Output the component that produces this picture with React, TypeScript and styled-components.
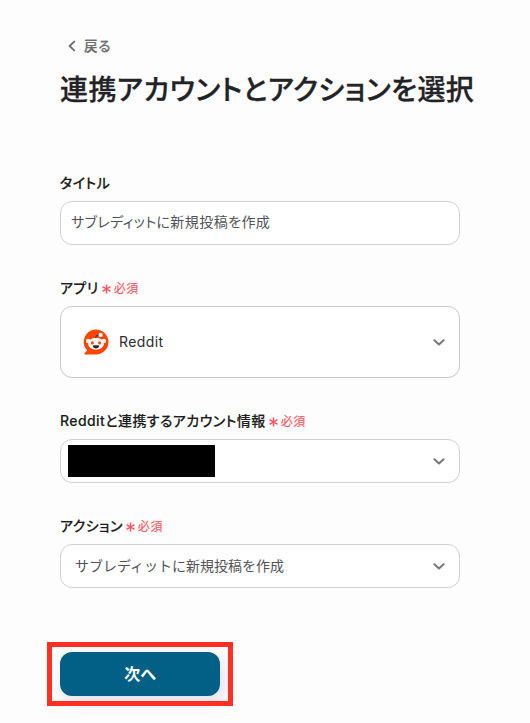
import React from "react";
import styled, { createGlobalStyle, css } from "styled-components";

const GlobalStyle = createGlobalStyle`
  *, *::before, *::after { box-sizing: border-box; }
  html, body { margin: 0; background: #fdfdfe; }
  body {
    color: #222;
    font-family: Inter, "Noto Sans CJK JP", sans-serif;
    font-size: 14px;
    font-feature-settings: "palt";
    overflow: hidden;
  }
  button, input { font: inherit; font-feature-settings: inherit; }
`;

const Page = styled.main`
  width: 460px;
  height: 723px;
  padding: 36px 0 0 60px;
`;

const BackButton = styled.button`
  display: flex;
  align-items: center;
  gap: 6px;
  height: 20px;
  padding: 0 0 0 6px;
  border: 0;
  background: none;
  color: #6c6c6c;
  font-size: 13.5px;
  font-weight: 500;
  line-height: 20px;
  letter-spacing: 0.8px;
  -webkit-text-stroke: 0.2px currentColor;
`;

const Title = styled.h1`
  margin: 14px 0 0;
  height: 40px;
  color: #232326;
  font-size: 28px;
  font-weight: 500;
  line-height: 40px;
  letter-spacing: 0.42px;
  -webkit-text-stroke: 0.3px currentColor;
  white-space: nowrap;
`;

const Form = styled.form`
  display: flex;
  flex-direction: column;
  gap: 32px;
  margin-top: 62px;
`;

const Field = styled.div`
  display: flex;
  flex-direction: column;
  gap: 9px;
`;

const Label = styled.label<{ $required?: boolean }>`
  display: flex;
  align-items: center;
  gap: 3px;
  height: 20px;
  padding-top: ${({ $required }) => ($required ? 2 : 1)}px;
  color: #1d1d20;
  font-size: 14px;
  font-weight: 500;
  line-height: 20px;
  letter-spacing: 0.42px;
  -webkit-text-stroke: 0.15px currentColor;
  white-space: nowrap;
`;

const Required = styled.span`
  display: flex;
  align-items: center;
  gap: 3px;
  padding-top: 2px;
  color: #ff5660;
  font-size: 12px;
  font-weight: 400;
  letter-spacing: 0.7px;
  -webkit-text-stroke: 0.15px currentColor;
`;

const box = css`
  width: 400px;
  border: 1px solid #cfcfd8;
  border-radius: 12px;
  background: #fff;
  color: #515158;
  font-size: 14px;
`;

const TextInput = styled.input`
  ${box}
  height: 44px;
  padding: 0 10px 4px;
  letter-spacing: 0.42px;
  outline: none;
`;

const Select = styled.div<{ $tall?: boolean }>`
  ${box}
  display: flex;
  align-items: center;
  justify-content: space-between;
  height: ${({ $tall }) => ($tall ? 72 : 44)}px;
  padding: 0 13px 0 ${({ $tall }) => ($tall ? 22 : 7)}px;
  border-color: ${({ $tall }) => ($tall ? "#c8c8ca" : "#cfcfdc")};
`;

const AppOption = styled.div`
  display: flex;
  align-items: center;
  gap: 10px;
  color: #2b2b2f;
  letter-spacing: 0.42px;
`;

const AppName = styled.span`
  padding-bottom: 2px;
`;

const ActionOption = styled.span`
  padding: 0 0 3px 7px;
  font-feature-settings: normal;
`;

const Redaction = styled.div`
  width: 147px;
  height: 32px;
  background: #000;
`;

const Submit = styled.div`
  position: relative;
  width: 160px;
  margin-top: 32px;
`;

const SubmitButton = styled.button`
  display: block;
  width: 160px;
  height: 44px;
  padding: 0 0 2px;
  border: 0;
  border-radius: 12px;
  background: #026087;
  color: #fff;
  font-size: 16px;
  font-weight: 700;
  box-shadow: 4px 6px 16px rgba(40, 40, 90, 0.14);
`;

const Highlight = styled.div`
  position: absolute;
  inset: -10px -13px;
  border: 5px solid #ff2f24;
  pointer-events: none;
`;

const Chevron = () => (
  <svg width="14" height="10" viewBox="0 0 14 10" fill="none">
    <path d="M2.4 3.2 7 7.4l4.6-4.2" stroke="#77777a" strokeWidth="2" strokeLinecap="round" strokeLinejoin="round" />
  </svg>
);

const BackIcon = () => (
  <svg width="12" height="14" viewBox="0 0 12 14" fill="none">
    <path d="M8.2 2.6 3.6 7l4.6 4.4" stroke="#707070" strokeWidth="1.9" strokeLinecap="round" strokeLinejoin="round" />
  </svg>
);

const Asterisk = () => (
  <svg width="9" height="10" viewBox="0 0 9 10" fill="none">
    <path d="M4.5.5v9M.5 2.7l8 4.6M8.5 2.7l-8 4.6" stroke="#ff5660" strokeWidth="1.5" />
  </svg>
);

const RedditLogo = () => (
  <svg width="26" height="26" viewBox="0 0 25 25">
    <path d="M12.5.5a12 12 0 1 1 0 24H2.1c-.8 0-1.1-.8-.6-1.3l2.5-2.5A12 12 0 0 1 12.5.5Z" fill="#ff4500" />
    <circle cx="5" cy="11.6" r="2.2" fill="#f4f7f8" />
    <circle cx="20" cy="11.6" r="2.2" fill="#f4f7f8" />
    <ellipse cx="12.5" cy="14.2" rx="7.7" ry="5.8" fill="#f4f7f8" />
    <path d="M12.2 8.7c.1-1.8 1.1-2.8 3.1-2.8" fill="none" stroke="#36414a" strokeWidth="1.2" />
    <circle cx="17" cy="5.7" r="2.1" fill="#f4f7f8" />
    <ellipse cx="9" cy="13.4" rx="1.5" ry="1.6" fill="#ff4d18" />
    <ellipse cx="16" cy="13.4" rx="1.5" ry="1.6" fill="#ff4d18" />
    <path d="M9.3 16c1.8-.4 4.6-.4 6.4 0-.5 1.7-1.7 2.7-3.2 2.7s-2.7-1-3.2-2.7Z" fill="#1f292f" />
  </svg>
);

const FieldLabel = ({ text, required }: { text: string; required?: boolean }) => (
  <Label $required={required}>
    <span>{text}</span>
    {required && (
      <Required>
        <Asterisk />
        必須
      </Required>
    )}
  </Label>
);

export default function App() {
  return (
    <>
      <GlobalStyle />
      <Page>
        <BackButton type="button">
          <BackIcon />
          戻る
        </BackButton>
        <Title>連携アカウントとアクションを選択</Title>
        <Form>
          <Field>
            <FieldLabel text="タイトル" />
            <TextInput defaultValue="サブレディットに新規投稿を作成" />
          </Field>
          <Field>
            <FieldLabel text="アプリ" required />
            <Select $tall>
              <AppOption>
                <RedditLogo />
                <AppName>Reddit</AppName>
              </AppOption>
              <Chevron />
            </Select>
          </Field>
          <Field>
            <FieldLabel text="Redditと連携するアカウント情報" required />
            <Select>
              <Redaction />
              <Chevron />
            </Select>
          </Field>
          <Field>
            <FieldLabel text="アクション" required />
            <Select>
              <ActionOption>サブレディットに新規投稿を作成</ActionOption>
              <Chevron />
            </Select>
          </Field>
          <Submit>
            <SubmitButton type="button">次へ</SubmitButton>
            <Highlight />
          </Submit>
        </Form>
      </Page>
    </>
  );
}
